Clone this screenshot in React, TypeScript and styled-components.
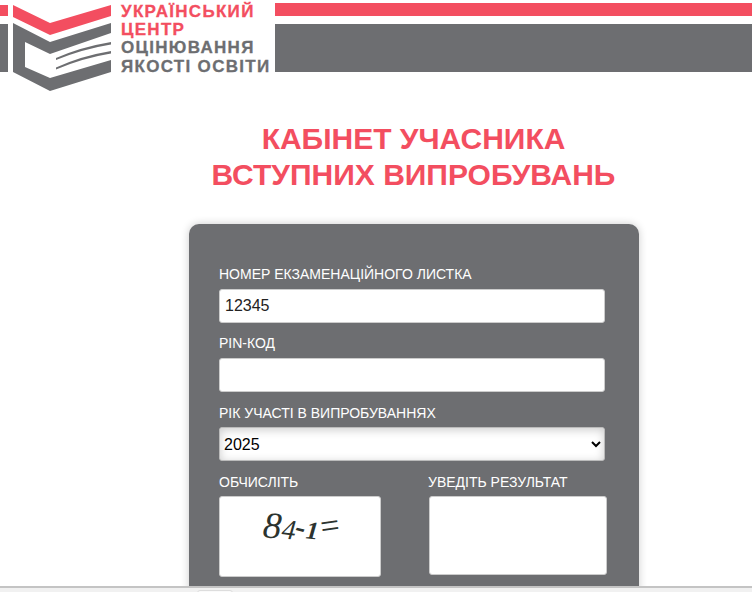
import React from 'react';
import styled, { createGlobalStyle } from 'styled-components';

const RED = '#f34e60';
const GREY = '#6d6e71';

const GlobalStyle = createGlobalStyle`
  html, body {
    margin: 0;
    height: 100%;
    overflow: hidden;
    background: #fff;
    font-family: "Liberation Sans", Arial, sans-serif;
  }
`;

const Header = styled.header`
  display: flex;
  height: 92px;
`;

const SideBars = styled.div<{ $width?: string }>`
  flex: ${(p) => (p.$width ? `0 0 ${p.$width}` : '1')};
  display: flex;
  flex-direction: column;
  height: 72px;
`;

const RedBar = styled.div<{ $top: number }>`
  height: ${(p) => 16 - p.$top}px;
  margin-top: ${(p) => p.$top}px;
  background: ${RED};
`;

const GreyBar = styled.div`
  flex: 1;
  margin-top: 8px;
  background: ${GREY};
`;

const Logo = styled.div`
  flex: 0 0 267px;
  display: flex;
  padding-left: 5px;
  box-sizing: border-box;
`;

const LogoMark = styled.svg`
  flex: 0 0 98px;
  width: 98px;
  height: 92px;
`;

const LogoText = styled.div`
  margin-left: 10px;
  padding-top: 2.5px;
  font-size: 17px;
  font-weight: 700;
  line-height: 18.4px;
  white-space: nowrap;
`;

const LogoLine = styled.div<{ $red?: boolean }>`
  color: ${(p) => (p.$red ? RED : GREY)};
  letter-spacing: 1.3px;
  -webkit-text-stroke: 0.3px ${(p) => (p.$red ? RED : GREY)};
`;

const Title = styled.h1`
  margin: 29px 0 31px 75px;
  text-align: center;
  color: ${RED};
  font-size: 30px;
  font-weight: 700;
  line-height: 36px;
`;

const Card = styled.form`
  width: 450px;
  height: 420px;
  box-sizing: border-box;
  margin-left: 189px;
  padding: 42px 34px 0 30px;
  background: ${GREY};
  border-radius: 10px;
  box-shadow: 0 0 8px rgba(0, 0, 0, 0.2);
`;

const Label = styled.label<{ $tight?: boolean }>`
  display: block;
  height: 17px;
  margin-bottom: ${(p) => (p.$tight ? 5 : 6)}px;
  color: #fff;
  font-size: 14px;
  line-height: 17px;
  white-space: nowrap;
`;

const Field = styled.div<{ $nudge?: boolean }>`
  padding-top: ${(p) => (p.$nudge ? 1 : 0)}px;
  margin-bottom: 12px;
`;

const TextInput = styled.input`
  display: block;
  width: 100%;
  height: 34px;
  box-sizing: border-box;
  padding: 0 5px;
  border: 1px solid #ccc;
  border-radius: 3px;
  outline: none;
  background: #fff;
  color: #222;
  font-family: inherit;
  font-size: 16px;
`;

const YearSelect = styled.select`
  display: block;
  width: 100%;
  height: 34px;
  box-sizing: border-box;
  padding: 0;
  border: 1px solid #bbb;
  border-radius: 3px;
  outline: none;
  background: #fff;
  box-shadow: inset 0 2px 10px rgba(0, 0, 0, 0.2);
  color: #000;
  font-family: inherit;
  font-size: 16px;
`;

const CaptchaRow = styled.div`
  display: flex;
  justify-content: space-between;
  padding-top: 1px;
`;

const CaptchaColumn = styled.div`
  width: 162px;
`;

const ResultColumn = styled.div`
  width: 178px;
  margin-right: -2px;
`;

const ResultLabel = styled(Label)`
  margin-left: -1px;
`;

const CaptchaBox = styled.div`
  display: flex;
  align-items: center;
  justify-content: center;
  height: 81px;
  box-sizing: border-box;
  padding: 0 0 23px 4px;
  background: #fff;
  border: 1px solid #ccc;
  border-radius: 3px;
`;

const CaptchaChar = styled.span<{ $size: number; $rotate: number; $y: number; $weight?: number }>`
  display: inline-block;
  color: #2c332f;
  font-family: "Liberation Serif", "Times New Roman", serif;
  font-style: italic;
  font-weight: ${(p) => p.$weight ?? 400};
  font-size: ${(p) => p.$size}px;
  line-height: 1;
  transform: translateY(${(p) => p.$y}px) rotate(${(p) => p.$rotate}deg);
`;

const ResultInput = styled(TextInput)`
  height: 79px;
`;

const StatusBar = styled.div`
  position: fixed;
  left: 0;
  right: 0;
  bottom: 0;
  height: 4px;
  background: #f1f1f1;
  border-top: 2px solid #c4c4c4;
`;

const StatusTab = styled.div`
  position: absolute;
  left: 197px;
  top: 2px;
  width: 36px;
  height: 6px;
  box-sizing: border-box;
  background: #fafafa;
  border: 1px solid #ddd;
  border-radius: 3px 3px 0 0;
`;

const captcha = [
  { c: '8', size: 37, rotate: 4, y: 0, weight: 400 },
  { c: '4', size: 28, rotate: 6, y: 5, weight: 400 },
  { c: '-', size: 30, rotate: 14, y: 2, weight: 700 },
  { c: '1', size: 25, rotate: 6, y: 5, weight: 700 },
  { c: '=', size: 34, rotate: -8, y: 1, weight: 400 },
];

const App = () => {
  return (
    <>
      <GlobalStyle />
      <Header>
        <SideBars $width="8px">
          <RedBar $top={5} />
          <GreyBar />
        </SideBars>
        <Logo>
          <LogoMark viewBox="0 0 98 92">
            <polygon fill={RED} points="0,5 37,23 98,5 98,16 37,35 0,17" />
            <polygon
              fill={GREY}
              points="0,23 37,42 98,23 98,33 37,54 12,42 12,67 37,78 98,60 98,72 37,91 0,72"
            />
            <path d="M43 58 Q68 47 98 42 L98 44.5 Q70 49 43 60 Z" fill={GREY} />
            <path d="M43 67.5 Q68 56 98 51 L98 53.5 Q70 58 43 69.5 Z" fill={GREY} />
          </LogoMark>
          <LogoText>
            <LogoLine $red>УКРАЇНСЬКИЙ</LogoLine>
            <LogoLine $red>ЦЕНТР</LogoLine>
            <LogoLine>ОЦІНЮВАННЯ</LogoLine>
            <LogoLine>ЯКОСТІ ОСВІТИ</LogoLine>
          </LogoText>
        </Logo>
        <SideBars>
          <RedBar $top={3} />
          <GreyBar />
        </SideBars>
      </Header>

      <Title>
        КАБІНЕТ УЧАСНИКА
        <br />
        ВСТУПНИХ ВИПРОБУВАНЬ
      </Title>

      <Card>
        <Field>
          <Label>НОМЕР ЕКЗАМЕНАЦІЙНОГО ЛИСТКА</Label>
          <TextInput defaultValue="12345" />
        </Field>
        <Field>
          <Label>PIN-КОД</Label>
          <TextInput />
        </Field>
        <Field $nudge>
          <Label $tight>РІК УЧАСТІ В ВИПРОБУВАННЯХ</Label>
          <YearSelect defaultValue="2025">
            <option>2025</option>
            <option>2024</option>
          </YearSelect>
        </Field>
        <CaptchaRow>
          <CaptchaColumn>
            <Label $tight>ОБЧИСЛІТЬ</Label>
            <CaptchaBox>
              {captcha.map((item, i) => (
                <CaptchaChar
                  key={i}
                  $size={item.size}
                  $rotate={item.rotate}
                  $y={item.y}
                  $weight={item.weight}
                >
                  {item.c}
                </CaptchaChar>
              ))}
            </CaptchaBox>
          </CaptchaColumn>
          <ResultColumn>
            <ResultLabel $tight>УВЕДІТЬ РЕЗУЛЬТАТ</ResultLabel>
            <ResultInput />
          </ResultColumn>
        </CaptchaRow>
      </Card>

      <StatusBar>
        <StatusTab />
      </StatusBar>
    </>
  );
};

export default App;
